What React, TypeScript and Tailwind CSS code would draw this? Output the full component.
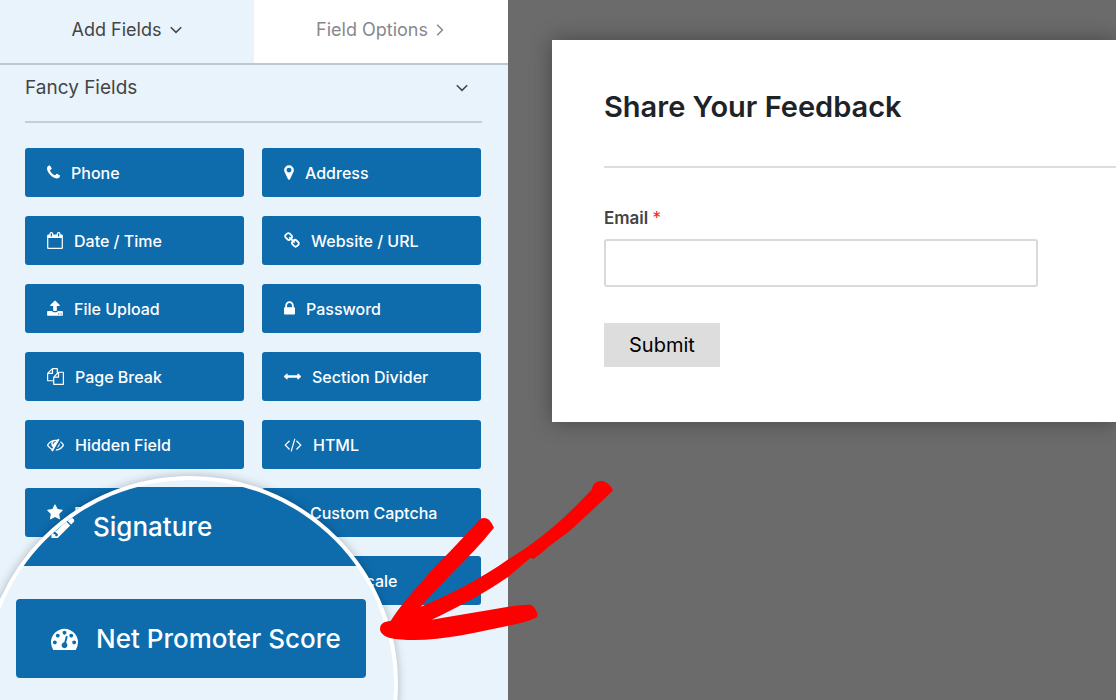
import React from "react";

type Glyph = { viewBox: string; size: string; path: string };

const glyphs: Record<string, Glyph> = {
  phone: {
    viewBox: "192 0 1408 1792",
    size: "w-[13px]",
    path: "M1600 1240q0 27-10 70.5t-21 68.5q-21 50-122 106-94 51-186 51-27 0-53-3.5t-57.5-12.5-47-14.5-55.5-20.5-49-18q-98-35-175-83-127-79-264-216t-216-264q-48-77-83-175-3-9-18-49t-20.5-55.5-14.5-47-12.5-57.5-3.5-53q0-92 51-186 56-101 106-122 25-11 68.5-21t70.5-10q14 0 21 3 18 6 53 76 11 19 30 54t35 63.5 31 53.5q3 4 17.5 25t21.5 35.5 7 28.5q0 20-28.5 50t-62 55-62 53-28.5 46q0 9 5 22.5t8.5 20.5 14 24 11.5 19q76 137 174 235t235 174q2 1 19 11.5t24 14 20.5 8.5 22.5 5q18 0 46-28.5t53-62 55-62 50-28.5q14 0 28.5 7t35.5 21.5 25 17.5q25 15 53.5 31t63.5 35 54 30q70 35 76 53 3 7 3 21z",
  },
  marker: {
    viewBox: "384 0 1024 1792",
    size: "w-[10px]",
    path: "M1152 640q0-106-75-181t-181-75-181 75-75 181 75 181 181 75 181-75 75-181zm256 0q0 109-33 179l-364 774q-16 33-47.5 52t-67.5 19-67.5-19-46.5-52l-365-774q-33-70-33-179 0-212 150-362t362-150 362 150 150 362z",
  },
  calendar: {
    viewBox: "64 0 1664 1792",
    size: "w-[16px]",
    path: "M192 1664h1408v-1024h-1408v1024zm384-1216v-288q0-14-9-23t-23-9h-64q-14 0-23 9t-9 23v288q0 14 9 23t23 9h64q14 0 23-9t9-23zm768 0v-288q0-14-9-23t-23-9h-64q-14 0-23 9t-9 23v288q0 14 9 23t23 9h64q14 0 23-9t9-23zm384-64v1280q0 52-38 90t-90 38h-1408q-52 0-90-38t-38-90v-1280q0-52 38-90t90-38h128v-96q0-66 47-113t113-47h64q66 0 113 47t47 113v96h384v-96q0-66 47-113t113-47h64q66 0 113 47t47 113v96h128q52 0 90 38t38 90z",
  },
  link: {
    viewBox: "64 0 1664 1792",
    size: "w-[16px]",
    path: "M1520 1216q0-40-28-68l-208-208q-28-28-68-28-42 0-72 32 3 3 19 18.5t21.5 21.5 15 19 13 25.5 3.5 27.5q0 40-28 68t-68 28q-15 0-27.5-3.5t-25.5-13-19-15-21.5-21.5-18.5-19q-33 31-33 73 0 40 28 68l206 207q27 27 68 27 40 0 68-26l147-146q28-28 28-67zm-703-705q0-40-28-68l-206-207q-28-28-68-28-39 0-68 27l-147 146q-28 28-28 67 0 40 28 68l208 208q27 27 68 27 42 0 72-31-3-3-19-18.5t-21.5-21.5-15-19-13-25.5-3.5-27.5q0-40 28-68t68-28q15 0 27.5 3.5t25.5 13 19 15 21.5 21.5 18.5 19q33-31 33-73zm895 705q0 120-85 203l-147 146q-83 83-203 83-121 0-204-85l-206-207q-83-83-83-203 0-123 88-209l-88-88q-86 88-208 88-120 0-204-84l-208-208q-84-84-84-204t85-203l147-146q83-83 203-83 121 0 204 85l206 207q83 83 83 203 0 123-88 209l88 88q86-88 208-88 120 0 204 84l208 208q84 84 84 204z",
  },
  upload: {
    viewBox: "64 0 1664 1792",
    size: "w-[16px]",
    path: "M1344 1472q0-26-19-45t-45-19-45 19-19 45 19 45 45 19 45-19 19-45zm256 0q0-26-19-45t-45-19-45 19-19 45 19 45 45 19 45-19 19-45zm128-224v320q0 40-28 68t-68 28h-1472q-40 0-68-28t-28-68v-320q0-40 28-68t68-28h427q21 56 70.5 92t110.5 36h256q61 0 110.5-36t70.5-92h427q40 0 68 28t28 68zm-325-648q-17 40-59 40h-256v448q0 26-19 45t-45 19h-256q-26 0-45-19t-19-45v-448h-256q-42 0-59-40-17-39 14-69l448-448q18-19 45-19t45 19l448 448q31 30 14 69z",
  },
  lock: {
    viewBox: "320 0 1152 1792",
    size: "w-[11px]",
    path: "M640 768h512v-192q0-106-75-181t-181-75-181 75-75 181v192zm832 96v576q0 40-28 68t-68 28h-960q-40 0-68-28t-28-68v-576q0-40 28-68t68-28h32v-192q0-184 132-316t316-132 316 132 132 316v192h32q40 0 68 28t28 68z",
  },
  files: {
    viewBox: "0 0 1792 1792",
    size: "w-[17px]",
    path: "M1696 384q40 0 68 28t28 68v1216q0 40-28 68t-68 28h-960q-40 0-68-28t-28-68v-288h-544q-40 0-68-28t-28-68v-672q0-40 20-88t48-76l408-408q28-28 76-48t88-20h416q40 0 68 28t28 68v328q68-40 128-40h416zm-544 213l-299 299h299v-299zm-640-384l-299 299h299v-299zm196 647l316-316v-416h-384v416q0 40-28 68t-68 28h-416v640h512v-256q0-40 20-88t48-76zm956 804v-1152h-384v416q0 40-28 68t-68 28h-416v640h896z",
  },
  arrows: {
    viewBox: "0 0 1792 1792",
    size: "w-[17px]",
    path: "M1792 896q0 26-19 45l-256 256q-19 19-45 19t-45-19-19-45v-128h-1024v128q0 26-19 45t-45 19-45-19l-256-256q-19-19-19-45t19-45l256-256q19-19 45-19t45 19 19 45v128h1024v-128q0-26 19-45t45-19 45 19l256 256q19 19 19 45z",
  },
  hidden: {
    viewBox: "0 0 1792 1792",
    size: "w-[17px]",
    path: "M555 1335l78-141q-87-63-136-159t-49-203q0-121 61-225-229 117-381 353 167 258 427 375zm389-759q0-20-14-34t-34-14q-125 0-214.5 89.5t-89.5 214.5q0 20 14 34t34 14 34-14 14-34q0-86 61-147t147-61q20 0 34-14t14-34zm363-191q0 7-1 9-106 189-316 567t-315 566l-49 89q-10 16-28 16-12 0-134-70-16-10-16-28 0-12 44-87-143-65-263.5-173t-208.5-245q-20-31-20-69t20-69q153-235 380-371t496-136q89 0 180 17l54-97q10-16 28-16 5 0 18 6t31 15.5 33 18.5 31.5 18.5 19.5 11.5q16 10 16 27zm37 447q0 139-79 253.5t-209 164.5l280-502q8 45 8 84zm448 128q0 35-20 69-39 64-109 145-150 172-347.5 267t-419.5 95l74-132q212-18 392.5-137t301.5-307q-115-179-282-294l63-112q95 64 182.5 153t144.5 184q20 34 20 69z",
  },
  code: {
    viewBox: "-64 0 1920 1792",
    size: "w-[18px]",
    path: "M553 1399l-50 50q-10 10-23 10t-23-10l-466-466q-10-10-10-23t10-23l466-466q10-10 23-10t23 10l50 50q10 10 10 23t-10 23l-393 393 393 393q10 10 10 23t-10 23zm591-1067l-373 1291q-4 13-15.5 19.5t-23.5 2.5l-62-17q-13-4-19.5-15.5t-2.5-24.5l373-1291q4-13 15.5-19.5t23.5-2.5l62 17q13 4 19.5 15.5t2.5 24.5zm657 651l-466 466q-10 10-23 10t-23-10l-50-50q-10-10-10-23t10-23l393-393-393-393q-10-10-10-23t10-23l50-50q10-10 23-10t23 10l466 466q10 10 10 23t-10 23z",
  },
  star: {
    viewBox: "64 0 1664 1792",
    size: "w-[16px]",
    path: "M1728 647q0 22-26 48l-363 354 86 500q1 7 1 20 0 21-10.5 35.5t-30.5 14.5q-19 0-40-12l-449-236-449 236q-22 12-40 12-21 0-31.5-14.5t-10.5-35.5q0-6 2-20l86-500-364-354q-25-27-25-48 0-37 56-46l502-73 225-455q19-41 49-41t49 41l225 455 502 73q56 9 56 46z",
  },
  question: {
    viewBox: "128 0 1536 1792",
    size: "w-[15px]",
    path: "M896 128a768 768 0 1 0 0 1536a768 768 0 1 0 0-1536zM800 1216h192v192h-192zM640 704q0-256 256-256t256 240q0 130-160 220v116h-192v-140q0-70 90-120t70-100q-10-60-66-60t-74 100z",
  },
  ellipsis: {
    viewBox: "192 0 1408 1792",
    size: "w-[13px]",
    path: "M192 800h384v384h-384zM704 800h384v384h-384zM1216 800h384v384h-384z",
  },
  pencil: {
    viewBox: "128 0 1536 1792",
    size: "w-[24px]",
    path: "M491 1536l91-91-235-235-91 91v107h128v128h107zm523-928q0-22-22-22-10 0-17 7l-542 542q-7 7-7 17 0 22 22 22 10 0 17-7l542-542q7-7 7-17zm-54-192l416 416-832 832h-416v-416zm683 96q0 53-37 90l-166 166-416-416 166-165q36-38 90-38 53 0 91 38l235 234q37 39 37 91z",
  },
  gauge: {
    viewBox: "0 0 1792 1792",
    size: "w-[27px]",
    path: "M384 1152q0-53-37.5-90.5t-90.5-37.5-90.5 37.5-37.5 90.5 37.5 90.5 90.5 37.5 90.5-37.5 37.5-90.5zm192-448q0-53-37.5-90.5t-90.5-37.5-90.5 37.5-37.5 90.5 37.5 90.5 90.5 37.5 90.5-37.5 37.5-90.5zm428 481l101-382q6-26-7.5-48.5t-38.5-29.5-48 6.5-30 39.5l-101 382q-60 5-107 43.5t-63 98.5q-20 77 20 146t117 89 146-20 89-117q16-60-6-117t-72-91zm660-33q0-53-37.5-90.5t-90.5-37.5-90.5 37.5-37.5 90.5 37.5 90.5 90.5 37.5 90.5-37.5 37.5-90.5zm-640-640q0-53-37.5-90.5t-90.5-37.5-90.5 37.5-37.5 90.5 37.5 90.5 90.5 37.5 90.5-37.5 37.5-90.5zm448 192q0-53-37.5-90.5t-90.5-37.5-90.5 37.5-37.5 90.5 37.5 90.5 90.5 37.5 90.5-37.5 37.5-90.5zm320 448q0 261-141 483-19 29-54 29h-1402q-35 0-54-29-141-221-141-483 0-182 71-348t191-286 286-191 348-71 348 71 286 191 191 286 71 348z",
  },
};

function Icon({ name, height }: { name: string; height: string }) {
  const glyph = glyphs[name];
  return (
    <svg aria-hidden="true" viewBox={glyph.viewBox} className={`shrink-0 fill-current ${height} ${glyph.size}`}>
      <path fillRule="evenodd" d={glyph.path} />
    </svg>
  );
}

function Chevron({ className }: { className: string }) {
  return (
    <svg aria-hidden="true" viewBox="0 0 12 12" className={className} fill="none" stroke="currentColor" strokeWidth="1.5">
      <path d="M.8 3.2 6 8.4l5.2-5.2" />
    </svg>
  );
}

const fields = [
  ["phone", "Phone"],
  ["marker", "Address"],
  ["calendar", "Date / Time"],
  ["link", "Website / URL"],
  ["upload", "File Upload"],
  ["lock", "Password"],
  ["files", "Page Break"],
  ["arrows", "Section Divider"],
  ["hidden", "Hidden Field"],
  ["code", "HTML"],
  ["star", "Rating"],
  ["question", "Custom Captcha"],
  ["ellipsis", "Likert Scale"],
];

function FieldButton({ icon, label }: { icon: string; label: string }) {
  return (
    <button
      type="button"
      className="flex h-[49px] items-center gap-[11px] rounded-[3px] bg-[#0e6cad] px-[22px] text-left text-base font-medium whitespace-nowrap text-white last:col-start-2"
    >
      <Icon name={icon} height="h-[17px]" />
      {label}
    </button>
  );
}

function LensButton({ icon, label }: { icon: string; label: string }) {
  return (
    <button
      type="button"
      className="flex h-[79px] w-[350px] items-center gap-[18px] rounded-[4px] bg-[#0e6cad] pl-[35px] text-left text-[26px] font-medium whitespace-nowrap text-white"
    >
      <Icon name={icon} height="h-[27px]" />
      {label}
    </button>
  );
}

function Sidebar() {
  return (
    <aside className="w-[508px] shrink-0 bg-[#e8f3fc]">
      <nav className="flex h-[65px] border-b-2 border-[#bcc8d3] text-lg">
        <button type="button" className="flex flex-1 items-center justify-center gap-[9px] pb-1 text-[#444444]">
          Add Fields
          <Chevron className="size-3" />
        </button>
        <button type="button" className="flex flex-1 items-center justify-center gap-[6px] bg-white pb-1 text-[#86898c]">
          Field Options
          <Chevron className="size-3 -rotate-90" />
        </button>
      </nav>
      <section className="pr-[26px] pl-[25px]">
        <h2>
          <button
            type="button"
            className="flex h-[58px] w-full items-center justify-between border-b-2 border-[#c3ced9] pr-[14px] pb-[10px] text-[19px] text-[#444444]"
          >
            Fancy Fields
            <Chevron className="size-3" />
          </button>
        </h2>
        <div className="grid grid-cols-2 gap-x-[18px] gap-y-[19px] pt-[25px] pr-px">
          {fields.map(([icon, label]) => (
            <FieldButton key={label} icon={icon} label={label} />
          ))}
        </div>
      </section>
    </aside>
  );
}

function Preview() {
  return (
    <main className="min-w-0 flex-1 bg-[#6b6b6b] pt-10 pl-11">
      <form
        className="bg-white pt-[47px] pb-[55px] pl-[52px] shadow-[0_0_20px_rgba(0,0,0,0.35)]"
        onSubmit={(e) => e.preventDefault()}
      >
        <h1 className="border-b-2 border-[#dddddd] pb-10 text-[29px] leading-[39px] font-semibold text-[#1d2327]">
          Share Your Feedback
        </h1>
        <label htmlFor="email" className="mt-[38px] block text-[17px] leading-6 font-semibold text-[#444444]">
          Email <span className="font-normal text-[#ff1a1a]">*</span>
        </label>
        <input
          id="email"
          type="email"
          className="mt-[9px] block h-12 w-[434px] max-w-full rounded-[3px] border-2 border-[#d9d9d9] bg-white px-3"
        />
        <button type="submit" className="mt-9 h-11 bg-[#dddddd] px-[25px] text-xl text-black">
          Submit
        </button>
      </form>
    </main>
  );
}

function Lens() {
  return (
    <div className="absolute top-[476px] left-[-18px] size-[416px] overflow-hidden rounded-full border-4 border-white bg-[#e8f3fc] shadow-[0_0_10px_rgba(0,0,0,0.25)]">
      <div className="flex flex-col gap-[33px] pt-[7px] pl-[30px]">
        <LensButton icon="pencil" label="Signature" />
        <LensButton icon="gauge" label="Net Promoter Score" />
      </div>
    </div>
  );
}

function Arrow() {
  return (
    <svg aria-hidden="true" viewBox="0 0 780 600" className="absolute top-[460px] left-[370px] h-[200px] w-[260px] fill-[#ff0000]">
      <path d="M330 177Q345 170 357 179Q364 186 372 203C335 250 292 293 250 335C215 372 180 408 152 440C240 405 340 352 415 298C440 282 462 268 484 252C550 205 610 148 666 88C668 70 682 61 696 63C714 66 724 80 729 91C690 130 640 175 598 214C575 231 555 246 534 261C525 272 508 284 490 297L482 293C460 311 438 331 415 350C340 402 265 440 185 479C260 467 340 452 415 440Q450 434 480 434Q495 438 503 463Q503 470 498 473C472 485 445 491 415 497C320 517 220 540 133 540Q90 540 60 534C42 529 30 518 30 507C30 492 42 484 62 483C85 445 122 404 160 360C195 318 235 281 266 247Q300 212 330 177Z" />
    </svg>
  );
}

export default function App() {
  return (
    <div className="relative flex h-screen min-h-[480px] overflow-hidden font-['Inter','Liberation_Sans',sans-serif]">
      <Sidebar />
      <Preview />
      <Lens />
      <Arrow />
    </div>
  );
}
